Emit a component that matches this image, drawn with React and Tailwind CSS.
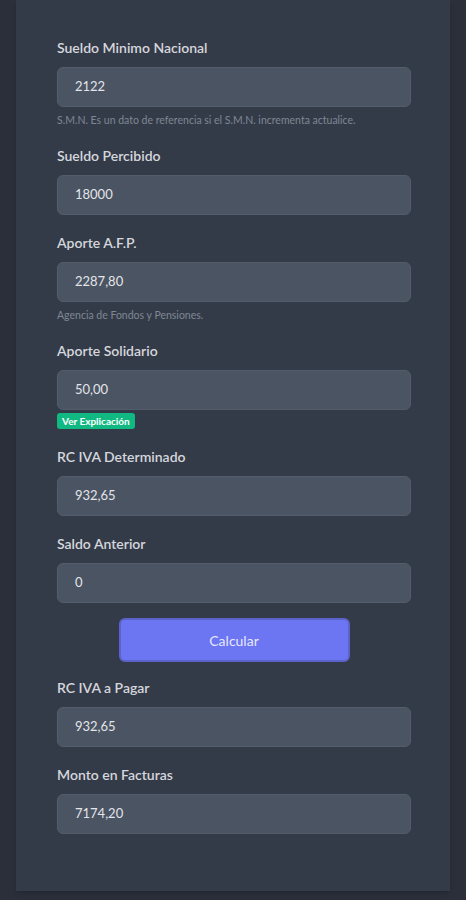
const FIELDS_TOP = [
  { label: 'Sueldo Minimo Nacional', value: '2122', help: 'S.M.N. Es un dato de referencia si el S.M.N. incrementa actualice.' },
  { label: 'Sueldo Percibido', value: '18000' },
  { label: 'Aporte A.F.P.', value: '2287,80', help: 'Agencia de Fondos y Pensiones.' },
  { label: 'Aporte Solidario', value: '50,00', badge: 'Ver Explicación' },
  { label: 'RC IVA Determinado', value: '932,65' },
  { label: 'Saldo Anterior', value: '0' },
];

const FIELDS_BOTTOM = [
  { label: 'RC IVA a Pagar', value: '932,65' },
  { label: 'Monto en Facturas', value: '7174,20' },
];

function Field({ label, value, help, badge, last }) {
  return (
    <div className={last ? '' : 'mb-[18px]'}>
      <label className="block h-5 leading-5 text-[14px] font-semibold text-[#d4d7dd] mb-[9px]">{label}</label>
      <div className="h-10 flex items-center px-[17px] rounded-md bg-[#4b5462] border border-[#535c6a] text-[13px] text-[#e2e5ea]">
        {value}
      </div>
      {help && (
        <p className="mt-[5px] h-4 leading-4 text-[10.5px] text-[#7f8794]">{help}</p>
      )}
      {badge && (
        <span className="block w-fit mt-[3px] h-4 leading-4 px-[5px] rounded-[3px] bg-[#10b981] text-white text-[10px] font-bold">
          {badge}
        </span>
      )}
    </div>
  );
}

export default function App() {
  return (
    <div className="min-h-screen bg-[#2a2f3a] px-4 pb-[9px]" style={{ fontFamily: 'Lato, "Noto Sans", sans-serif' }}>
      <div className="bg-[#343b48] shadow-md pl-[41px] pr-[39px] pt-[38px] pb-[57px]">
        {FIELDS_TOP.map((f, i) => (
          <Field key={f.label} {...f} last={i === FIELDS_TOP.length - 1} />
        ))}

        <div className="flex justify-center mt-[15px] mb-4">
          <button className="w-[231px] h-11 rounded-md bg-[#6c75f2] border-2 border-[#5b63c9] text-[14px] text-[#e6e8fb]">
            Calcular
          </button>
        </div>

        {FIELDS_BOTTOM.map((f, i) => (
          <Field key={f.label} {...f} last={i === FIELDS_BOTTOM.length - 1} />
        ))}
      </div>
    </div>
  );
}
